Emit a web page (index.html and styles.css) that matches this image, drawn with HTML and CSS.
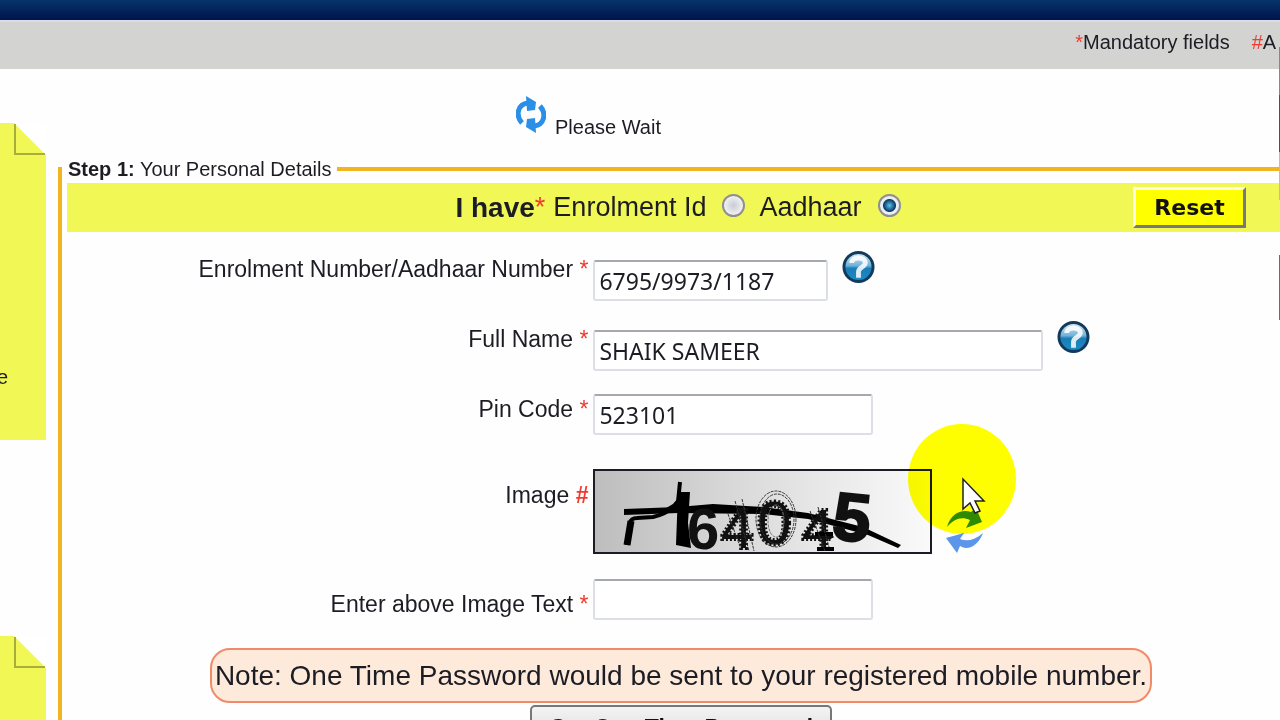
FILE: index.html
```
<!DOCTYPE html>
<html lang="en">

<head>
  <meta charset="utf-8">
  <title>Aadhaar</title>
  <link rel="stylesheet" href="styles.css">
</head>

<body>
  <div class="topbar"></div>
  <div class="legendbar">
    <span><span class="req">*</span>Mandatory fields</span>
    <span><span class="req">#</span>A</span>
  </div>

  <div class="main">
    <div class="sidebar">
      <div class="sticky">
        <svg class="fold" width="32" height="34" viewBox="0 0 32 34">
          <path d="M0 0H32V32Z" fill="#fff"/>
          <path d="M1 1V31H31" fill="none" stroke="#a9ad3a" stroke-width="2"/>
        </svg>
        <p>e</p>
      </div>
      <div class="sticky">
        <svg class="fold" width="32" height="34" viewBox="0 0 32 34">
          <path d="M0 0H32V32Z" fill="#fff"/>
          <path d="M1 1V31H31" fill="none" stroke="#a9ad3a" stroke-width="2"/>
        </svg>
      </div>
    </div>

    <form class="content">
      <div class="wait">
        <svg width="30" height="40" viewBox="0 0 30 40">
          <g fill="none" stroke="#2b8fe8" stroke-width="5">
            <path d="M6 28C-1 20 2 9 12 8"/>
            <path d="M24 11C31 19 28 30 18 31"/>
          </g>
          <path d="M10 1L20 7L19 15L11 16ZM20 38L10 32L11 24L19 23Z" fill="#2b8fe8"/>
        </svg>
        <span>Please Wait</span>
      </div>

      <fieldset class="details">
        <legend><b>Step 1:</b> Your Personal Details</legend>

        <div class="choice">
          <div class="options">
            <b>I have</b><span class="req">*</span>
            <label for="eid">Enrolment Id</label>
            <input type="radio" name="idtype" id="eid">
            <label for="uid">Aadhaar</label>
            <input type="radio" name="idtype" id="uid" checked>
          </div>
          <button type="reset" class="reset">Reset</button>
        </div>

        <div class="row">
          <label for="number">Enrolment Number/Aadhaar Number <span class="req">*</span></label>
          <div class="field">
            <input type="text" id="number" class="short" value="6795/9973/1187">
            <svg class="help" width="33" height="34" viewBox="0 0 34 34">
              <defs>
                <linearGradient id="ball" x1="0" y1="0" x2="0" y2="1">
                  <stop offset="0" stop-color="#e4eef5"/>
                  <stop offset=".45" stop-color="#6fb3d9"/>
                  <stop offset=".55" stop-color="#1b7db5"/>
                  <stop offset="1" stop-color="#1c8cc8"/>
                </linearGradient>
              </defs>
              <circle cx="17" cy="17" r="15" fill="url(#ball)" stroke="#123a5c" stroke-width="3"/>
              <path d="M10 13C10 6 24 6 24 13C24 17 17 17 17 22V28" fill="none" stroke="#fff" stroke-width="5" opacity=".85"/>
            </svg>
          </div>
        </div>

        <div class="row">
          <label for="name">Full Name <span class="req">*</span></label>
          <div class="field">
            <input type="text" id="name" class="long" value="SHAIK SAMEER">
            <svg class="help" width="33" height="34" viewBox="0 0 34 34">
              <circle cx="17" cy="17" r="15" fill="url(#ball)" stroke="#123a5c" stroke-width="3"/>
              <path d="M10 13C10 6 24 6 24 13C24 17 17 17 17 22V28" fill="none" stroke="#fff" stroke-width="5" opacity=".85"/>
            </svg>
          </div>
        </div>

        <div class="row pin">
          <label for="pin">Pin Code <span class="req">*</span></label>
          <div class="field">
            <input type="text" id="pin" value="523101">
          </div>
        </div>

        <div class="row image">
          <span class="label">Image <b class="req">#</b></span>
          <div class="field">
            <svg class="captcha" width="339" height="85" viewBox="0 0 339 85">
              <defs>
                <linearGradient id="shade">
                  <stop offset="0" stop-color="#bdbdbd"/>
                  <stop offset=".5" stop-color="#dedede"/>
                  <stop offset="1" stop-color="#fafafa"/>
                </linearGradient>
              </defs>
              <rect x="1" y="1" width="337" height="83" fill="url(#shade)" stroke="#1c1c24" stroke-width="2"/>
              <!-- noise line -->
              <path d="M31 40L31 46L85 44L170 45L215 50L275 66L305 79L308 76L270 58L215 44L170 38L120 35L85 38Z" fill="#000"/>
              <path d="M34 76L37 54Q38 49 44 49L60 48Q77 44 85 33L87 13" fill="none" stroke="#000" stroke-width="4"/>
              <path d="M34 76L38 52" fill="none" stroke="#000" stroke-width="7"/>
              <path d="M68 42L80 35L90 23L95 40Z" fill="#000"/>
              <path d="M85 23H97L95 54L98 79L83 76Z" fill="#000"/>
              <!-- digits -->
              <g class="digits">
                <text x="94" y="80" font-size="58" class="bold thin">6</text>
                <text x="128" y="79" font-size="58" class="fuzzy">4</text>
                <text x="164" y="75" font-size="62" class="fuzzy">0</text>
                <text x="209" y="79" font-size="56" class="fuzzy">4</text>
                <text x="240" y="72" font-size="68" class="bold" transform="rotate(6 260 50)">5</text>
              </g>
              <path d="M222 65H240M224 80H241" stroke="#000" stroke-width="4"/>
              <g fill="none" stroke="#333" stroke-width="1" stroke-dasharray="3 1">
                <ellipse cx="183" cy="50" rx="20" ry="28"/>
                <ellipse cx="184" cy="50" rx="17" ry="25"/>
                <ellipse cx="183" cy="52" rx="8" ry="16" stroke="#777"/>
                <path d="M142 32L156 82M149 30L161 82M135 45L148 80M217 42L232 82M225 38L236 78"/>
              </g>
            </svg>
            <svg class="refresh" width="38" height="46" viewBox="0 0 38 46">
              <path d="M1 19C5 5 16 1 25 4L30 0L36 14L20 20L24 12C15 8 8 11 1 19Z" fill="#2f8a1e"/>
              <path d="M37 25C32 38 22 43 14 38L11 45L0 30L18 25L14 31C21 34 29 32 37 25Z" fill="#5b96ea"/>
            </svg>
            <svg class="pointer" width="108" height="110" viewBox="0 0 108 110">
              <ellipse cx="54" cy="55" rx="54" ry="55" fill="#ff0"/>
            </svg>
            <svg class="arrow" width="24" height="38" viewBox="0 0 24 38">
              <path d="M1 2V32L8 26L13 36L18 34L13 24H22Z" fill="#fff" stroke="#222" stroke-width="1.5"/>
            </svg>
          </div>
        </div>

        <div class="row verify">
          <label for="captcha">Enter above Image Text <span class="req">*</span></label>
          <div class="field">
            <input type="text" id="captcha">
          </div>
        </div>

        <p class="note">Note: One Time Password would be sent to your registered mobile number.</p>
        <button type="button" class="otp">Get One Time Password</button>
      </fieldset>
    </form>
  </div>
  <div class="edge"></div>
</body>

</html>
```
FILE: styles.css
```
:root {
  --note: #f1f755;
  --orange: #f2b41f;
}

* {
  box-sizing: border-box;
}

html {
  overflow: hidden;
}

body {
  margin: 0;
  height: 100vh;
  overflow: hidden;
  background: #fefefe;
  color: #1c1c24;
  font-family: "Liberation Sans", Arial, sans-serif;
  font-size: 20px;
}

.req {
  color: #f03a30;
}

.topbar {
  height: 22px;
  background: linear-gradient(#05346a, #00144c);
  border-bottom: 2px solid #d8dcea;
}

.legendbar {
  display: flex;
  gap: 22px;
  height: 47px;
  padding-left: 84%;
  background: #d3d3d2;
  font-size: 20px;
  line-height: 40px;
  white-space: nowrap;
  overflow: hidden;
}

.main {
  display: flex;
  gap: 12px;
}

/* left notes */
.sidebar {
  flex: none;
  width: 46px;
  padding-top: 54px;
}

.sticky {
  position: relative;
  height: 317px;
  margin-bottom: 196px;
  padding-top: 242px;
  background: var(--note);
}

.sticky p {
  margin: 0;
  font-size: 20px;
  line-height: 24px;
  text-indent: -3px;
}

.fold {
  position: absolute;
  top: 0;
  right: 0;
}

/* form */
.content {
  flex: 1;
  min-width: 0;
}

.wait {
  display: flex;
  align-items: flex-start;
  gap: 9px;
  height: 88px;
  padding: 26px 0 0 458px;
  line-height: 24px;
}

.wait span {
  margin-top: 20px;
}

.details {
  margin: 0 -24px 0 0;
  padding: 2px 5px;
  border: 4px solid var(--orange);
}

legend {
  margin-left: -5px;
  padding: 0 6px;
  line-height: 24px;
}

.choice {
  position: relative;
  display: flex;
  align-items: center;
  justify-content: center;
  height: 49px;
  margin-bottom: 18px;
  background: var(--note);
  font-size: 27px;
}

.options {
  display: flex;
  align-items: center;
}

.options b {
  font-size: 28px;
}

.options label {
  margin-left: 8px;
}

input[type="radio"] {
  appearance: none;
  width: 23px;
  height: 23px;
  margin: 0 6px 4px 16px;
  border: 2px solid #8c8f94;
  border-radius: 50%;
  background: radial-gradient(#c9cbd6, #f4f4f4 75%);
}

input[type="radio"]:checked {
  background: radial-gradient(circle, #58c4f0 0, #14507e 5px, #12385c 6px, #eceef2 7px);
}

.reset {
  position: absolute;
  right: 49px;
  top: 4px;
  width: 113px;
  height: 41px;
  padding: 0;
  border: 3px solid;
  border-color: #fffbe0 #77777c #77777c #fffbe0;
  background: #ff0;
  color: #111;
  font: bold 22px "DejaVu Sans", Verdana, sans-serif;
}

.row {
  display: grid;
  grid-template-columns: 521fr 701fr;
  column-gap: 5px;
  margin-bottom: 19px;
}

.row > label,
.label {
  text-align: right;
  font-size: 23px;
  line-height: 38px;
}

.field {
  position: relative;
  display: flex;
  gap: 14px;
}

input[type="text"] {
  width: 280px;
  height: 41px;
  padding: 2px 4px;
  border: 2px solid #dcdfe6;
  border-top-color: #a6a8b0;
  border-radius: 3px;
  background: #fff;
  color: #1c1c24;
  font: 23px "Noto Sans", Tahoma, sans-serif;
}

.field .short,
.field .long {
  margin-top: 10px;
}

input[type="text"].short {
  width: 235px;
}

input[type="text"].long {
  width: 450px;
}

.pin input {
  margin-top: 4px;
}

.row.pin {
  margin-bottom: 34px;
}

.image .label {
  padding-top: 7px;
}

.row.image {
  margin-bottom: 25px;
}

.refresh {
  margin-top: 39px;
}

.digits {
  fill: #111;
  font-family: "Liberation Sans", Arial, sans-serif;
  stroke: #111;
  stroke-width: 2;
}

.fuzzy {
  stroke-dasharray: 2 2;
  stroke-width: 4;
}

.bold {
  font-weight: bold;
}

.thin {
  stroke: none;
}

/* mouse pointer with its highlight */
.pointer {
  position: absolute;
  left: 315px;
  top: -45px;
  mix-blend-mode: multiply;
}

.arrow {
  position: absolute;
  left: 369px;
  top: 8px;
}

.row.verify {
  margin-bottom: 28px;
}

.verify > label {
  align-self: end;
  line-height: 32px;
}

.note {
  width: fit-content;
  margin: 0 auto 2px;
  padding: 0 3px;
  border: 2px solid #f08a68;
  border-radius: 20px;
  background: #feeadb;
  font-size: 28px;
  line-height: 51px;
  white-space: nowrap;
}

.otp {
  display: block;
  width: 302px;
  height: 46px;
  margin: 0 auto;
  padding: 0;
  border: 2px solid #77777a;
  border-radius: 5px;
  background: linear-gradient(#f4f4f4, #d4d4d4);
  color: #111;
  font: bold 23px "Liberation Sans", Arial, sans-serif;
}

/* strip of the window behind */
.edge {
  position: absolute;
  right: 0;
  top: 47px;
  width: 1px;
  height: 273px;
  background: linear-gradient(#cf5bb8 48px, #1b6a4c 48px 105px, #b9bcc4 105px 153px, transparent 153px 208px, #8d5590 208px);
}
```
